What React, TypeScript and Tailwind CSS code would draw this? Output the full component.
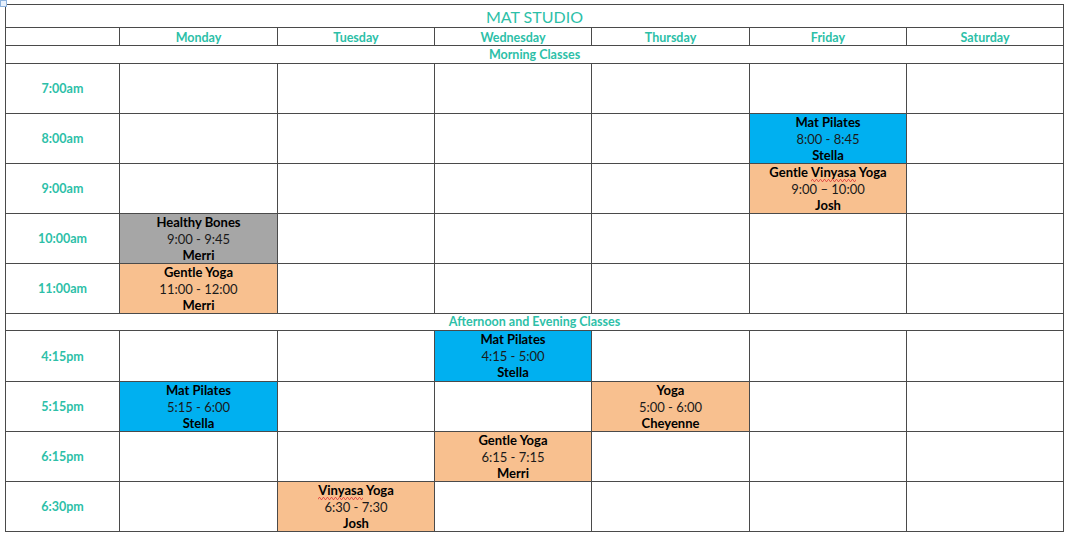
import React from 'react';

type Slot = { name: string; time: string; who: string; color: 'blue' | 'peach' | 'gray'; squiggle?: string };

const days = ['Monday', 'Tuesday', 'Wednesday', 'Thursday', 'Friday', 'Saturday'];

const bg: Record<Slot['color'], string> = {
  blue: 'bg-[#00b0f0]',
  peach: 'bg-[#f8c08f]',
  gray: 'bg-[#a6a6a6]',
};

// rows: label, height class, slots per day index
const morning: { label: string; h: string; slots: Record<number, Slot> }[] = [
  { label: '7:00am', h: 'h-[50px]', slots: {} },
  { label: '8:00am', h: 'h-[50px]', slots: { 4: { name: 'Mat Pilates', time: '8:00 - 8:45', who: 'Stella', color: 'blue' } } },
  {
    label: '9:00am',
    h: 'h-[50px]',
    slots: { 4: { name: 'Gentle Vinyasa Yoga', time: '9:00 – 10:00', who: 'Josh', color: 'peach', squiggle: 'Vinyasa' } },
  },
  { label: '10:00am', h: 'h-[50px]', slots: { 0: { name: 'Healthy Bones', time: '9:00 - 9:45', who: 'Merri', color: 'gray' } } },
  { label: '11:00am', h: 'h-[50px]', slots: { 0: { name: 'Gentle Yoga', time: '11:00 - 12:00', who: 'Merri', color: 'peach' } } },
];

const evening: { label: string; h: string; slots: Record<number, Slot> }[] = [
  { label: '4:15pm', h: 'h-[51px]', slots: { 2: { name: 'Mat Pilates', time: '4:15 - 5:00', who: 'Stella', color: 'blue' } } },
  {
    label: '5:15pm',
    h: 'h-[50px]',
    slots: {
      0: { name: 'Mat Pilates', time: '5:15 - 6:00', who: 'Stella', color: 'blue' },
      3: { name: 'Yoga', time: '5:00 - 6:00', who: 'Cheyenne', color: 'peach' },
    },
  },
  { label: '6:15pm', h: 'h-[50px]', slots: { 2: { name: 'Gentle Yoga', time: '6:15 - 7:15', who: 'Merri', color: 'peach' } } },
  {
    label: '6:30pm',
    h: 'h-[50px]',
    slots: { 1: { name: 'Vinyasa Yoga', time: '6:30 - 7:30', who: 'Josh', color: 'peach', squiggle: 'Vinyasa' } },
  },
];

const cell = 'border-r border-b border-[#4a4a4a]';

// spell-check squiggle under a word
function Squiggle({ word }: { word: string }) {
  return (
    <span className="relative inline-block">
      {word}
      <svg className="absolute left-0 bottom-[-1px] w-full h-[3px]" preserveAspectRatio="none">
        <defs>
          <pattern id="sq" width="4" height="3" patternUnits="userSpaceOnUse">
            <path d="M0 2.5 L1 0.5 L2 0.5 L3 2.5 L4 2.5" stroke="#e03c3c" strokeWidth="0.8" fill="none" />
          </pattern>
        </defs>
        <rect width="100%" height="3" fill="url(#sq)" />
      </svg>
    </span>
  );
}

function ClassName({ s }: { s: Slot }) {
  if (!s.squiggle) return <>{s.name}</>;
  const rest = s.name.split(s.squiggle);
  return (
    <>
      {rest[0]}
      <Squiggle word={s.squiggle} />
      {rest[1]}
    </>
  );
}

function TimeRow({ label, h, slots }: { label: string; h: string; slots: Record<number, Slot> }) {
  return (
    <>
      <div className={`${cell} ${h} flex items-center justify-center pt-[2px] font-bold text-[12.5px] text-[#2dbfa8]`}>{label}</div>
      {days.map((d, i) => {
        const s = slots[i];
        return (
          <div key={d} className={`${cell} ${h} ${s ? bg[s.color] : 'bg-white'} text-center text-[13px] leading-[16.5px] text-[#1a1a1a]`}>
            {s && (
              <div>
                <div className="font-bold text-black">
                  <ClassName s={s} />
                </div>
                <div>{s.time}</div>
                <div className="font-bold text-black">{s.who}</div>
              </div>
            )}
          </div>
        );
      })}
    </>
  );
}

export default function App() {
  return (
    <div className="relative w-[1069px] h-[535px] bg-white font-['Lato','Open_Sans',sans-serif]">
      <div className="absolute left-0 top-0 w-[7px] h-[7px] border border-[#8fb4de] bg-[#e8f0fb]" />
      <div className="pl-[5px] pt-[4px]">
        <div className="grid w-[1059px] grid-cols-[114px_158px_157px_157px_158px_157px_157px] border-t border-l border-[#4a4a4a]">
          <div className={`${cell} col-span-7 h-[23px] flex items-center justify-center pt-[1px] text-[16px] text-[#2dbfa8]`}>MAT STUDIO</div>
          <div className={`${cell} h-[18px]`} />
          {days.map((d) => (
            <div key={d} className={`${cell} h-[18px] flex items-center justify-center pt-[3px] font-bold text-[12.5px] text-[#2dbfa8]`}>
              {d}
            </div>
          ))}
          <div className={`${cell} col-span-7 h-[18px] flex items-center justify-center pt-[2px] font-bold text-[12.5px] text-[#2dbfa8]`}>
            Morning Classes
          </div>
          {morning.map((r) => (
            <TimeRow key={r.label} {...r} />
          ))}
          <div className={`${cell} col-span-7 h-[17px] flex items-center justify-center pt-[1px] font-bold text-[12.5px] text-[#2dbfa8]`}>
            Afternoon and Evening Classes
          </div>
          {evening.map((r) => (
            <TimeRow key={r.label} {...r} />
          ))}
        </div>
      </div>
    </div>
  );
}
